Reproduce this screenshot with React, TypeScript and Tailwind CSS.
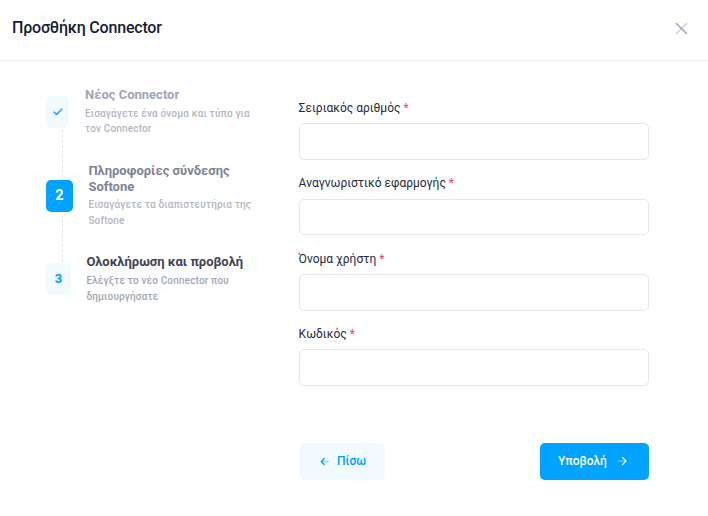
import React from "react";

type Step = {
  marker: React.ReactNode;
  markerClass: string;
  title: React.ReactNode;
  titleClass: string;
  text: React.ReactNode;
  textClass: string;
  rowClass: string;
};

const Check = () => (
  <svg width="10" height="8" viewBox="0 0 10 8" fill="none" stroke="#1b9cff" strokeWidth="1.4" strokeLinecap="round" strokeLinejoin="round">
    <path d="M1 4 L3.5 6.5 L8.8 1.2" />
  </svg>
);

const steps: Step[] = [
  {
    marker: <Check />,
    markerClass: "w-[23px] mr-4 bg-[#f1faff]",
    title: "Νέος Connector",
    titleClass: "text-[#a1a5b7]",
    text: <>Εισαγάγετε ένα όνομα και τύπο για<br />τον Connector</>,
    textClass: "text-[#b5b5c3] leading-[15px] pb-px",
    rowClass: "h-[50px] mb-[26px]",
  },
  {
    marker: "2",
    markerClass: "w-[27px] mr-[15.4px] bg-[#00a3ff] text-white text-[14.5px] pb-px",
    title: <>Πληροφορίες σύνδεσης<br />Softone</>,
    titleClass: "text-[#7e8299]",
    text: <>Εισαγάγετε τα διαπιστευτήρια της<br />Softone</>,
    textClass: "text-[#b5b5c3] -mt-px mb-px leading-[15.5px]",
    rowClass: "h-[66px] mb-[25px]",
  },
  {
    marker: "3",
    markerClass: "w-[25px] mr-[15.4px] bg-[#f1faff] text-[#009ef7] text-[13px]",
    title: "Ολοκλήρωση και προβολή",
    titleClass: "text-[#3f4254]",
    text: <>Ελέγξτε το νέο Connector που<br />δημιουργήσατε</>,
    textClass: "text-[#a1a5b7] leading-[15.5px]",
    rowClass: "h-[50px]",
  },
];

const fields = ["Σειριακός αριθμός", "Αναγνωριστικό εφαρμογής", "Όνομα χρήστη", "Κωδικός"];

export default function App() {
  return (
    <div className="flex h-[516px] w-[708px] flex-col overflow-hidden bg-white font-['Roboto',sans-serif]">
      <header className="flex h-[61px] shrink-0 items-center justify-between border-b border-[#eff2f5] pr-5 pb-[5px] pl-3">
        <h1 className="text-[16px] leading-5 font-medium tracking-[-0.2px] text-[#181c32]">Προσθήκη Connector</h1>
        <button aria-label="Κλείσιμο" className="mt-px">
          <svg className="block" width="13" height="13" viewBox="0 0 13 13" fill="none" strokeWidth="1.6" strokeLinecap="round">
            <path d="M11.5 1.5 L1.5 11.5" stroke="#cccfdb" />
            <path d="M1.5 1.5 L11.5 11.5" stroke="#a1a5b7" />
          </svg>
        </button>
      </header>
      <main className="flex">
        <aside className="relative w-[299px] shrink-0 pt-[26px] pl-[46px]">
          <div className="absolute top-[69px] left-[62px] h-[132px] border-l border-dashed border-[#e4e6ef]" />
          {steps.map((s, i) => (
            <div key={i} className={`relative flex items-center ${s.rowClass}`}>
              <div className={`flex h-8 shrink-0 items-center justify-center rounded-[5px] font-bold ${s.markerClass}`}>{s.marker}</div>
              <div className="whitespace-nowrap">
                <h3 className={`pb-[3px] text-[13px] leading-4 font-bold ${s.titleClass}`}>{s.title}</h3>
                <p className={`text-[10px] font-medium tracking-[0.16px] ${s.textClass}`}>{s.text}</p>
              </div>
            </div>
          ))}
        </aside>
        <form className="w-[350px] pt-[38px]" onSubmit={(e) => e.preventDefault()}>
          <div className="flex flex-col gap-[14.3px]">
            {fields.map((f, i) => (
              <label key={f} className="block h-[61px]">
                <span className={`-ml-[0.4px] block text-[12px] leading-[18px] text-[#252a3f] ${i === 1 ? "h-[25px]" : "h-6"}`}>
                  {f} <span className="text-[#f1416c]">*</span>
                </span>
                <input
                  className={`block w-full rounded-[5px] border border-[#e4e6ef] bg-white px-3 text-[12px] outline-none ${i === 1 ? "h-9" : "h-[37px]"}`}
                />
              </label>
            ))}
          </div>
          <div className="mt-[57px] flex justify-between text-[12px]">
            <button className="flex h-[37px] w-[86px] items-center rounded-[5px] bg-[#f1faff] pl-[21px] font-medium text-[#009ef7]">
              <svg width="10" height="9" viewBox="0 0 10 9" fill="none" stroke="currentColor" strokeWidth="1.4" strokeLinecap="round" strokeLinejoin="round">
                <path d="M3 4.5 H8.5" opacity=".4" />
                <path d="M4.2 1.5 L1.4 4.5 L4.2 7.5" />
              </svg>
              <span className="ml-[7px]">Πίσω</span>
            </button>
            <button className="flex h-[37px] w-[109px] items-center rounded-[5px] bg-[#00a3ff] pl-[18px] font-medium text-white">
              <span>Υποβολή</span>
              <svg className="ml-[10px]" width="11" height="10" viewBox="0 0 11 10" fill="none" stroke="currentColor" strokeWidth="1.2" strokeLinecap="round" strokeLinejoin="round">
                <path d="M1.5 5 H8" opacity=".5" />
                <path d="M5.5 1.5 L9 5 L5.5 8.5" />
              </svg>
            </button>
          </div>
        </form>
      </main>
    </div>
  );
}
